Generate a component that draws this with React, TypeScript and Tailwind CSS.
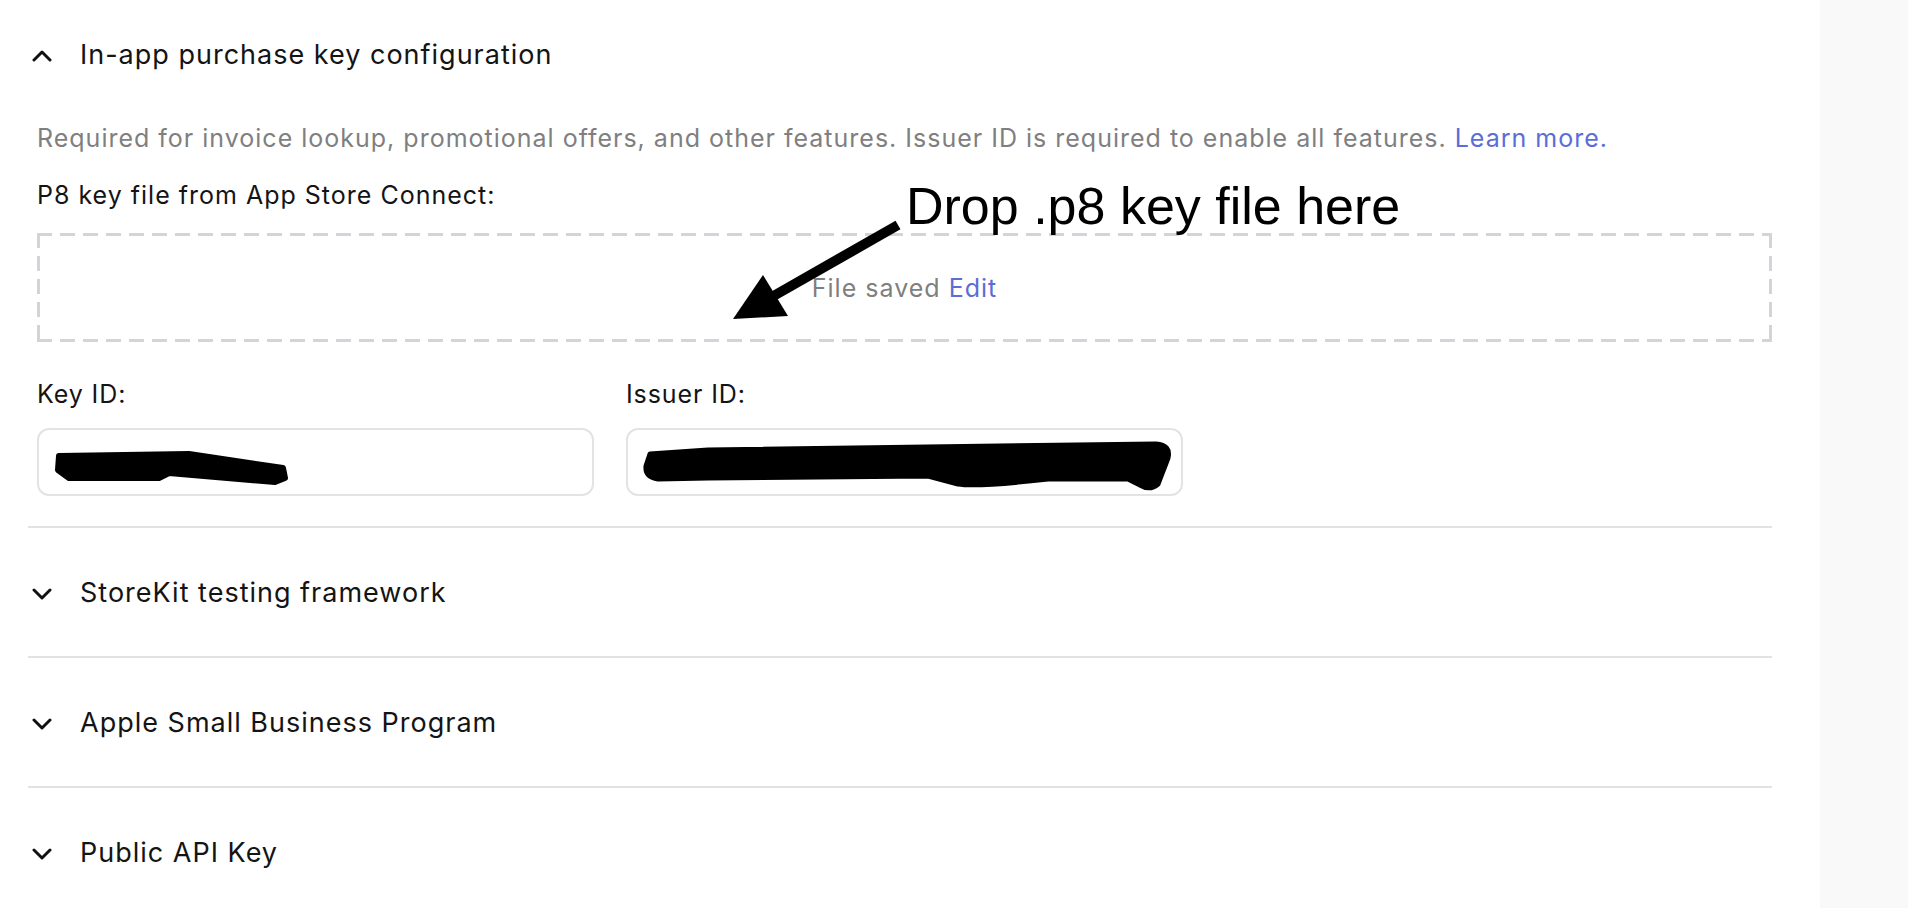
import { ReactNode } from "react";

function Chevron({ up }: { up?: boolean }) {
    return (
        <svg width="20" height="12" viewBox="0 0 20 12" fill="none">
            <polyline
                points={up ? "2,10 10,2 18,10" : "2,2 10,10 18,2"}
                stroke="#111"
                strokeWidth="3"
                strokeLinecap="round"
                strokeLinejoin="round"
            />
        </svg>
    );
}

function SectionHeader({ title, up }: { title: string; up?: boolean }) {
    return (
        <div className="flex items-center">
            <div className="flex w-[28px] justify-center">
                <Chevron up={up} />
            </div>
            <span className="ml-[24px] text-[27px] tracking-[1px] text-[#141414]">{title}</span>
        </div>
    );
}

function Collapsed({ title }: { title: string }) {
    return (
        <div>
            <div className="h-[2px] bg-[#e2e2e2]" />
            <div className="flex h-[128px] items-center pt-[3px]">
                <SectionHeader title={title} />
            </div>
        </div>
    );
}

function Field({ label, children }: { label: string; children: ReactNode }) {
    return (
        <div className="w-[557px]">
            <div className="text-[25px] leading-[30px] tracking-[0.9px] text-[#141414]">{label}</div>
            <div className="relative mt-[19px] h-[68px] rounded-[12px] border-2 border-[#e3e3e3] bg-white">
                {children}
            </div>
        </div>
    );
}

export default function App() {
    return (
        <div className="flex h-[908px] w-full overflow-hidden bg-white font-['Inter','Noto_Sans',sans-serif]">
            <main className="relative flex-1 pl-[28px] pr-[48px]">

                {/* In-app purchase key configuration (open) */}
                <div className="flex h-[108px] items-center pt-[3px]">
                    <SectionHeader title="In-app purchase key configuration" up />
                </div>

                <div className="pl-[9px] pb-[30px]">
                    <p className="mt-[15px] whitespace-nowrap text-[25px] leading-[30px] tracking-[1px] text-[#7f7f7f]">
                        Required for invoice lookup, promotional offers, and other features. Issuer ID is required to enable all features.{" "}
                        <a className="text-[#5b6dd6]">Learn more.</a>
                    </p>

                    <div className="mt-[27px] text-[25px] leading-[30px] tracking-[1px] text-[#141414]">
                        P8 key file from App Store Connect:
                    </div>

                    {/* drop zone, dashes 15 on / 8 off */}
                    <div className="mt-[23px] flex h-[109px] items-center justify-center pt-[2px] bg-[linear-gradient(to_right,#d1d4d8_15px,transparent_15px),linear-gradient(to_right,#d1d4d8_15px,transparent_15px),linear-gradient(to_bottom,#d1d4d8_15px,transparent_15px),linear-gradient(to_bottom,#d1d4d8_15px,transparent_15px)] bg-[length:23px_3px,23px_3px,3px_23px,3px_23px] bg-[position:0_0,0_100%,0_0,100%_0] [background-repeat:repeat-x,repeat-x,repeat-y,repeat-y] text-[25px] tracking-[1px] text-[#7f7f7f]">
                        <span>
                            File saved <a className="text-[#5b6dd6]">Edit</a>
                        </span>
                    </div>

                    <div className="mt-[37px] flex gap-[32px]">
                        <Field label="Key ID:">
                            <svg className="absolute left-0 top-0" width="553" height="64" viewBox="0 0 553 64">
                                <path
                                    d="M20 26 L150 24 L244 38 L246 48 L236 52 L130 43 L120 48 L30 48 L19 40 Z"
                                    fill="#000"
                                    stroke="#000"
                                    strokeWidth="6"
                                    strokeLinejoin="round"
                                />
                            </svg>
                        </Field>
                        <Field label="Issuer ID:">
                            <svg className="absolute left-0 top-0" width="553" height="64" viewBox="0 0 553 64">
                                <path
                                    d="M22 24 L80 20 L528 14 Q543 15 540 28 L530 54 Q522 61 512 55 L500 49 L420 49 Q350 57 330 54 L300 46 L80 48 L30 49 Q17 47 18 36 Z"
                                    fill="#000"
                                    stroke="#000"
                                    strokeWidth="5"
                                    strokeLinejoin="round"
                                />
                            </svg>
                        </Field>
                    </div>
                </div>

                <Collapsed title="StoreKit testing framework" />
                <Collapsed title="Apple Small Business Program" />
                <Collapsed title="Public API Key" />

                {/* annotation drawn over the page */}
                <div className="absolute left-[906px] top-[180px] font-['Liberation_Sans',Arial,sans-serif] text-[52px] leading-none text-black">
                    Drop .p8 key file here
                </div>
                <svg className="absolute left-[720px] top-[215px]" width="190" height="115" viewBox="0 0 190 115">
                    <line x1="178" y1="10" x2="50" y2="83" stroke="#000" strokeWidth="10" />
                    <polygon points="13,104 43,60 68,101" fill="#000" />
                </svg>
            </main>

            <aside className="w-[88px] shrink-0 bg-[#f9f9f9]" />
        </div>
    );
}
